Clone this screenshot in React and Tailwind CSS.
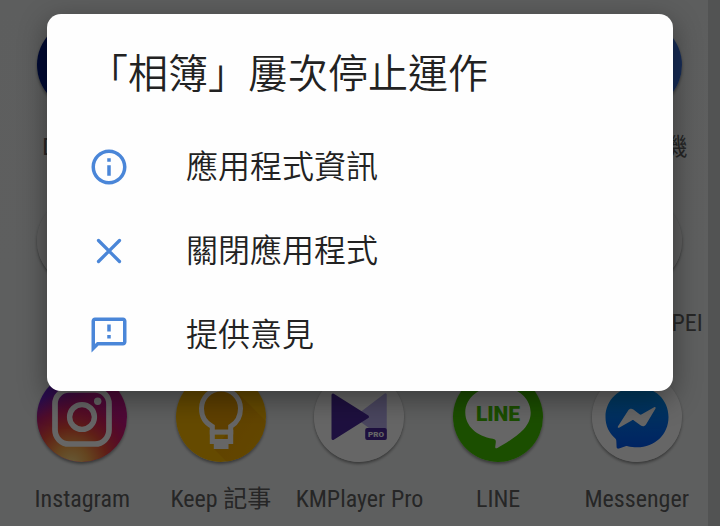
import React from 'react';
import { MdInfoOutline, MdOutlineFeedback } from 'react-icons/md';

function CloseIcon({ className }) {
  return (
    <svg viewBox="0 0 44 44" className={className} aria-hidden="true">
      <path
        d="M11 11 33 33M33 11 11 33"
        fill="none"
        stroke="currentColor"
        strokeWidth="3.4"
        strokeLinecap="round"
      />
    </svg>
  );
}

function PlainIcon({ color }) {
  return (
    <svg viewBox="0 0 90 90" className="size-full" aria-hidden="true">
      <circle cx="45" cy="45" r="45" fill={color} />
    </svg>
  );
}

function InstagramIcon() {
  return (
    <svg viewBox="0 0 90 90" className="size-full" aria-hidden="true">
      <defs>
        <linearGradient id="ig-base" x1="0.1" y1="0.15" x2="0.8" y2="0.7">
          <stop offset="0" stopColor="#5a1fc8" />
          <stop offset="0.5" stopColor="#c01a90" />
          <stop offset="1" stopColor="#c8148a" />
        </linearGradient>
        <radialGradient id="ig-glow" cx="0.38" cy="1.02" r="0.8">
          <stop offset="0" stopColor="#ffe08a" />
          <stop offset="0.25" stopColor="#fbaa4e" />
          <stop offset="0.5" stopColor="#ee5038" />
          <stop offset="0.75" stopColor="#de2050" stopOpacity="0.7" />
          <stop offset="1" stopColor="#c01a70" stopOpacity="0" />
        </radialGradient>
      </defs>
      <circle cx="45" cy="45" r="45" fill="url(#ig-base)" />
      <circle cx="45" cy="45" r="45" fill="url(#ig-glow)" />
      <g fill="none" stroke="#fff">
        <rect x="18" y="18" width="54" height="54" rx="14" strokeWidth="5.7" />
        <circle cx="45" cy="45" r="12.4" strokeWidth="5.4" />
      </g>
      <circle cx="60.7" cy="29.3" r="3.7" fill="#fff" />
    </svg>
  );
}

function KeepIcon() {
  return (
    <svg viewBox="0 0 90 90" className="size-full" aria-hidden="true">
      <defs>
        <linearGradient id="keep-shade" x1="0.2" y1="0.2" x2="0.9" y2="0.9">
          <stop offset="0" stopColor="#f0a600" />
          <stop offset="1" stopColor="#fab400" />
        </linearGradient>
        <clipPath id="keep-clip">
          <circle cx="45" cy="45" r="45" />
        </clipPath>
      </defs>
      <circle cx="45" cy="45" r="45" fill="#fdba00" />
      <path
        d="M61 20 100 59V110H71L38 77 60 50Z"
        fill="url(#keep-shade)"
        clipPath="url(#keep-clip)"
      />
      <path
        d="M36.3 60V54.5C29.5 51 25.5 44.5 25.5 36.5a19.5 19.5 0 0 1 39 0C64.5 44.5 60.5 51 54.7 54.5V60Z"
        fill="#eda000"
        stroke="#fff"
        strokeWidth="5"
      />
      <path
        fill="#fff"
        fillRule="evenodd"
        d="M33.8 58H57.2V72H52.5V77H37.8V72H33.8ZM38.8 62.3V67H51.8V62.3Z"
      />
    </svg>
  );
}

function KmPlayerIcon() {
  return (
    <svg viewBox="0 0 90 90" className="size-full" aria-hidden="true">
      <circle cx="45" cy="45" r="45" fill="#fff" />
      <path
        d="M71.5 22.5V66.5L42 45Z"
        fill="#b9b0ee"
        stroke="#b9b0ee"
        strokeWidth="2.5"
        strokeLinejoin="round"
      />
      <path
        d="M19 23V66.5L53.5 44.7Z"
        fill="#4b2a9e"
        stroke="#4b2a9e"
        strokeWidth="3"
        strokeLinejoin="round"
      />
      <rect x="51.2" y="56" width="21.6" height="12" rx="2" fill="#4b2a9e" />
      <text
        x="62"
        y="65"
        textAnchor="middle"
        fill="#fff"
        fontFamily="Roboto, sans-serif"
        fontWeight="900"
        fontSize="8"
      >
        PRO
      </text>
    </svg>
  );
}

function LineIcon() {
  return (
    <svg viewBox="0 0 90 90" className="size-full" aria-hidden="true">
      <circle cx="45" cy="45" r="45" fill="#45c400" />
      <path
        d="M45 14C27 14 12.3 25.5 12.3 40.5c0 13.5 11.5 24 27.5 26.2 3 .6 3.2 1.5 2.9 4.3l-.5 4c0 1.3.8 1.7 2.2 1C50 73 64 64.5 70.5 57.5 75.5 52 77.7 46.5 77.7 40.5 77.7 25.5 63 14 45 14Z"
        fill="#fff"
      />
      <text
        x="45"
        y="49"
        textAnchor="middle"
        fill="#45c400"
        fontFamily="Roboto, sans-serif"
        fontWeight="900"
        fontSize="21"
      >
        LINE
      </text>
    </svg>
  );
}

function MessengerIcon() {
  return (
    <svg viewBox="0 0 90 90" className="size-full" aria-hidden="true">
      <defs>
        <linearGradient id="msg-blue" x1="0" y1="0" x2="0" y2="1">
          <stop offset="0" stopColor="#0098f0" />
          <stop offset="1" stopColor="#0058f5" />
        </linearGradient>
      </defs>
      <circle cx="45" cy="45" r="45" fill="#fff" />
      <path
        d="M45 15C27 15 13.5 28 13.5 45c0 8.800 3.500 16 9.800 21.500.6.6 1 1.400 1 2.200l.3 6.300c.1 1.300 1.200 2 2.400 1.500l6.500-2.300c.8-.3 1.500-.2 2.200 0 3 .8 6 1.100 9.300 1.100 18 0 31.500-13 31.500-30.300S63 15 45 15Z"
        fill="url(#msg-blue)"
      />
      <path
        d="M26 54.2 36 38.7c1.4-2.2 3.6-2.4 5.4-1.1l6.2 4.700c.7.5 1.5.5 2.2 0l12.300-7c1.200-.7 2 .2 1.300 1.400L54 52.500c-1.300 2-3.300 2.300-5.200 1l-6.900-5.100c-.7-.5-1.400-.5-2.100 0L27.500 55.600c-1.200.7-2.200-.1-1.500-1.400Z"
        fill="#fff"
      />
    </svg>
  );
}

const apps = [
  { label: 'Disney +', icon: <PlainIcon color="#031a80" /> },
  null,
  null,
  null,
  { label: '安全 相機', icon: <PlainIcon color="#3a6fd8" /> },
  { label: '', icon: <PlainIcon color="#e9e9e9" /> },
  null,
  null,
  null,
  { label: 'Mobile TAIPEI', icon: <PlainIcon color="#e9e9e9" /> },
  { label: 'Instagram', icon: <InstagramIcon /> },
  { label: 'Keep 記事', icon: <KeepIcon /> },
  { label: 'KMPlayer Pro', icon: <KmPlayerIcon /> },
  { label: 'LINE', icon: <LineIcon /> },
  { label: 'Messenger', icon: <MessengerIcon /> },
];

const actions = [
  { label: '應用程式資訊', Icon: MdInfoOutline },
  { label: '關閉應用程式', Icon: CloseIcon },
  { label: '提供意見', Icon: MdOutlineFeedback },
];

function HomeScreen() {
  return (
    <div className="flex min-h-screen bg-gradient-to-b from-[#e9ecec] to-[#eceeee]">
      <div className="grid flex-1 grid-cols-5 content-start gap-y-[33px] pl-[13px] pr-0.5 pt-5">
        {apps.map((app, i) =>
          app ? (
            <button
              key={i}
              type="button"
              aria-label={app.label || 'App'}
              className="flex flex-col items-center gap-[21px]"
            >
              <span className="size-[90px] rounded-full shadow-[0_2px_3px_rgba(0,0,0,0.4)]">
                {app.icon}
              </span>
              <span className="h-8 whitespace-nowrap text-2xl leading-8 text-[#606060]">
                {app.label}
              </span>
            </button>
          ) : (
            <span key={i} />
          ),
        )}
      </div>
      <div className="w-3 bg-[#cccfcf]" />
    </div>
  );
}

function CrashDialog() {
  return (
    <div className="absolute inset-0 flex items-start bg-black/60 px-[47px] pt-3.5">
      <div
        role="dialog"
        aria-labelledby="crash-title"
        className="w-full rounded-[14px] bg-[#fefefe] pb-3.5 pt-[37px] font-[350] shadow-[0_8px_28px_rgba(0,0,0,0.4)]"
      >
        <h1 id="crash-title" className="px-[41px] text-[40px] leading-12 text-[#222]">
          「相簿」屢次停止運作
        </h1>
        <div className="mt-[26px]">
          {actions.map(({ label, Icon }) => (
            <button
              key={label}
              type="button"
              className="flex h-21 w-full items-center gap-14 px-[41px] text-left"
            >
              <Icon className="size-[42px] shrink-0 text-[#4a86d8]" />
              <span className="text-[32px] leading-[42px] text-[#222]">{label}</span>
            </button>
          ))}
        </div>
      </div>
    </div>
  );
}

export default function App() {
  return (
    <div className="relative min-h-screen overflow-hidden font-['Roboto_Condensed',Roboto,'Noto_Sans_CJK_TC',sans-serif]">
      <HomeScreen />
      <CrashDialog />
    </div>
  );
}
